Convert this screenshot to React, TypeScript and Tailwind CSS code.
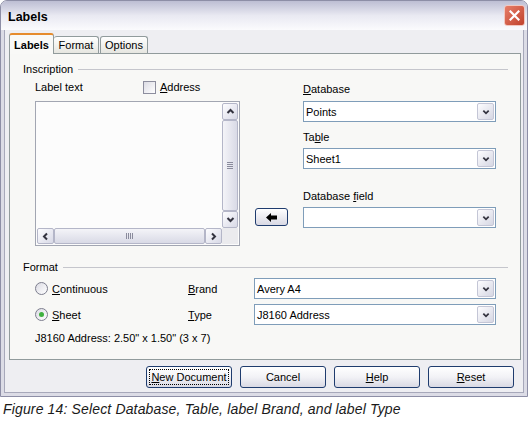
import React from "react";

const Chev = ({ dir, size = 9 }: { dir: "up" | "down" | "left" | "right"; size?: number }) => {
  const paths: Record<string, string> = {
    down: "M1.5 3 L4.5 6 L7.5 3",
    up: "M1.5 6 L4.5 3 L7.5 6",
    left: "M6 1.5 L3 4.5 L6 7.5",
    right: "M3 1.5 L6 4.5 L3 7.5",
  };
  return (
    <svg width={size} height={size} viewBox="0 0 9 9">
      <path d={paths[dir]} fill="none" stroke="#33333f" strokeWidth="2" />
    </svg>
  );
};

const U = ({ c }: { c: string }) => <span className="underline underline-offset-[1px]">{c}</span>;

const Select = ({ value, w }: { value: string; w: string }) => (
  <div className={`${w} h-[21px] border border-[#7f9db9] bg-white flex items-center justify-between pl-[2px] pr-[1px]`}>
    <span className="leading-[14px]">{value}</span>
    <div className="w-[17px] h-[17px] rounded-[2px] border border-[#c4c6d6] bg-gradient-to-br from-[#fdfdff] to-[#d6d7e3] flex items-center justify-center">
      <Chev dir="down" size={8} />
    </div>
  </div>
);

const SBtn = ({ dir, w, h }: { dir: "up" | "down" | "left" | "right"; w: string; h: string }) => (
  <div className={`${w} ${h} rounded-[2px] border border-[#b4b6c8] bg-gradient-to-br from-[#fdfdff] to-[#d8d9e6] flex items-center justify-center shrink-0`}>
    <Chev dir={dir} />
  </div>
);

const Radio = ({ checked }: { checked?: boolean }) => (
  <div className="w-[13px] h-[13px] rounded-full border border-[#7d7e8e] bg-gradient-to-br from-[#dcdce4] to-white flex items-center justify-center shrink-0">
    {checked && <div className="w-[5px] h-[5px] rounded-full bg-[#3fb13f]" />}
  </div>
);

const Btn = ({ children, focus }: { children: React.ReactNode; focus?: boolean }) => (
  <div className="w-[86px] h-[22px] rounded-[3px] border border-[#1f3c6e] bg-gradient-to-b from-white via-[#f2f2f6] to-[#d9d9e4] flex items-center justify-center relative">
    {focus && <div className="absolute inset-[2px] border border-dotted border-black" />}
    <span className="leading-[14px] relative">{children}</span>
  </div>
);

export default function App() {
  return (
    <div className="w-[530px] h-[426px] bg-white font-['Liberation_Sans',Arial,sans-serif] text-[11px] text-black">
      <div className="w-[528px] h-[397px] flex flex-col rounded-t-[7px] border border-[#8d8ea6] overflow-hidden bg-[#dcdce6]">
        {/* title bar */}
        <div className="h-[29px] shrink-0 flex items-center justify-between pl-[7px] pr-[2px] bg-gradient-to-b from-[#bdbed3] via-[#e9e9f2] to-[#fbfbfd]">
          <span className="font-bold text-[12.5px] leading-[16px] mt-[2px]">Labels</span>
          <div className="w-[21px] h-[21px] rounded-[3px] border border-[#f1c8c0] bg-gradient-to-br from-[#e77d68] to-[#c0412b] flex items-center justify-center">
            <svg width="11" height="11" viewBox="0 0 11 11">
              <path d="M1.5 1.5 L9.5 9.5 M9.5 1.5 L1.5 9.5" stroke="white" strokeWidth="2.2" strokeLinecap="square" />
            </svg>
          </div>
        </div>
        {/* body */}
        <div className="flex-1 mx-[3px] mb-[3px] border-x border-b border-[#a7a8ba] bg-[#eeeef2] flex flex-col pl-[4px]">
          {/* tabs */}
          <div className="h-[21px] mt-[2px] flex items-end relative z-10">
            <div className="h-[21px] w-[45px] mb-[-1px] rounded-t-[3px] border-x border-t-[2px] border-x-[#919b9c] border-t-[#e68b2c] bg-[#f9f9f7] flex items-center justify-center font-bold leading-[14px]">
              Labels
            </div>
            <div className="h-[17px] w-[45px] rounded-t-[3px] border-x border-t border-[#919b9c] border-l-0 bg-gradient-to-b from-white to-[#e6e6e0] flex items-center justify-center leading-[14px]">
              Format
            </div>
            <div className="h-[17px] w-[48px] ml-[1px] rounded-t-[3px] border-x border-t border-[#919b9c] bg-gradient-to-b from-white to-[#e6e6e0] flex items-center justify-center leading-[14px]">
              Options
            </div>
          </div>
          {/* panel */}
          <div className="w-[512px] h-[307px] border border-[#919b9c] bg-[#f8f8f6] flex flex-col pl-[13px] pr-[12px]">
            {/* Inscription header */}
            <div className="mt-[8px] h-[14px] flex items-center">
              <span className="leading-[14px]">Inscription</span>
              <div className="flex-1 h-px bg-[#c5c6cc] ml-[5px]" />
            </div>
            <div className="flex items-start pl-[12px]">
              {/* left column */}
              <div className="w-[205px] flex flex-col">
                <div className="mt-[4px] h-[14px] flex items-center">
                  <span className="w-[108px] leading-[14px]">Label text</span>
                  <div className="w-[13px] h-[13px] border border-[#8d8e9e] bg-gradient-to-br from-[#dcdce4] to-white shrink-0" />
                  <span className="ml-[4px] leading-[14px]">
                    <U c="A" />ddress
                  </span>
                </div>
                <div className="mt-[7px] h-[145px] w-[205px] border border-[#a2a6b2] bg-[#fcfcfc] p-[1px] flex flex-col">
                  <div className="flex-1 flex">
                    <div className="flex-1" />
                    <div className="w-[16px] flex flex-col">
                      <SBtn dir="up" w="w-[16px]" h="h-[17px]" />
                      <div className="flex-1 rounded-[2px] border border-[#b4b6c8] bg-gradient-to-r from-[#f4f4f8] to-[#d9dae6] flex items-center justify-center">
                        <div className="flex flex-col gap-[1px]">
                          <div className="w-[6px] h-px bg-[#8a8b9c]" />
                          <div className="w-[6px] h-px bg-[#8a8b9c]" />
                          <div className="w-[6px] h-px bg-[#8a8b9c]" />
                          <div className="w-[6px] h-px bg-[#8a8b9c]" />
                        </div>
                      </div>
                      <SBtn dir="down" w="w-[16px]" h="h-[17px]" />
                    </div>
                  </div>
                  <div className="h-[16px] flex">
                    <SBtn dir="left" w="w-[17px]" h="h-[16px]" />
                    <div className="flex-1 rounded-[2px] border border-[#b4b6c8] bg-gradient-to-b from-[#f4f4f8] to-[#d9dae6] flex items-center justify-center">
                      <div className="flex gap-[1px]">
                        <div className="w-px h-[6px] bg-[#8a8b9c]" />
                        <div className="w-px h-[6px] bg-[#8a8b9c]" />
                        <div className="w-px h-[6px] bg-[#8a8b9c]" />
                        <div className="w-px h-[6px] bg-[#8a8b9c]" />
                      </div>
                    </div>
                    <SBtn dir="right" w="w-[17px]" h="h-[16px]" />
                    <div className="w-[16px] h-[16px] bg-[#ebebee]" />
                  </div>
                </div>
              </div>
              {/* arrow button */}
              <div className="ml-[15px] mt-[132px] w-[33px] h-[18px] rounded-[3px] border border-[#1f3c6e] bg-gradient-to-b from-white to-[#d9d9e4] flex items-center justify-center">
                <svg width="11" height="9" viewBox="0 0 11 9">
                  <path d="M0 4.5 L5 0 V2.5 H11 V6.5 H5 V9 Z" fill="black" />
                </svg>
              </div>
              {/* right column */}
              <div className="ml-[15px] w-[193px] flex flex-col">
                <div className="mt-[6px] h-[14px] leading-[14px]">
                  <U c="D" />atabase
                </div>
                <div className="mt-[5px]">
                  <Select value="Points" w="w-[193px]" />
                </div>
                <div className="mt-[8px] h-[14px] leading-[14px]">
                  Ta<U c="b" />le
                </div>
                <div className="mt-[4px]">
                  <Select value="Sheet1" w="w-[193px]" />
                </div>
                <div className="mt-[20px] h-[14px] leading-[14px]">
                  Database <U c="f" />ield
                </div>
                <div className="mt-[4px]">
                  <Select value="" w="w-[193px]" />
                </div>
              </div>
            </div>
            {/* Format header */}
            <div className="mt-[14px] h-[14px] flex items-center">
              <span className="leading-[14px]">Format</span>
              <div className="flex-1 h-px bg-[#c5c6cc] ml-[5px]" />
            </div>
            <div className="pl-[12px] flex flex-col">
              <div className="mt-[4px] h-[21px] flex items-center">
                <div className="w-[153px] flex items-center">
                  <Radio />
                  <span className="ml-[4px] leading-[14px]">
                    <U c="C" />ontinuous
                  </span>
                </div>
                <div className="w-[66px] leading-[14px]">
                  <U c="B" />rand
                </div>
                <Select value="Avery A4" w="w-[242px]" />
              </div>
              <div className="mt-[5px] h-[21px] flex items-center">
                <div className="w-[153px] flex items-center">
                  <Radio checked />
                  <span className="ml-[4px] leading-[14px]">
                    <U c="S" />heet
                  </span>
                </div>
                <div className="w-[66px] leading-[14px]">
                  <U c="T" />ype
                </div>
                <Select value="J8160 Address" w="w-[242px]" />
              </div>
              <div className="mt-[6px] h-[14px] leading-[14px]">J8160 Address: 2.50" x 1.50" (3 x 7)</div>
            </div>
          </div>
          {/* buttons */}
          <div className="mt-[6px] flex justify-end gap-[8px] pr-[9px]">
            <Btn focus>
              <U c="N" />ew Document
            </Btn>
            <Btn>Cancel</Btn>
            <Btn>
              <U c="H" />elp
            </Btn>
            <Btn>
              <U c="R" />eset
            </Btn>
          </div>
        </div>
      </div>
      <div className="pl-[3px] pt-[3px] italic text-[14px] leading-[18px] tracking-[0.15px] text-[#1a1a1a]">
        Figure 14: Select Database, Table, label Brand, and label Type
      </div>
    </div>
  );
}
